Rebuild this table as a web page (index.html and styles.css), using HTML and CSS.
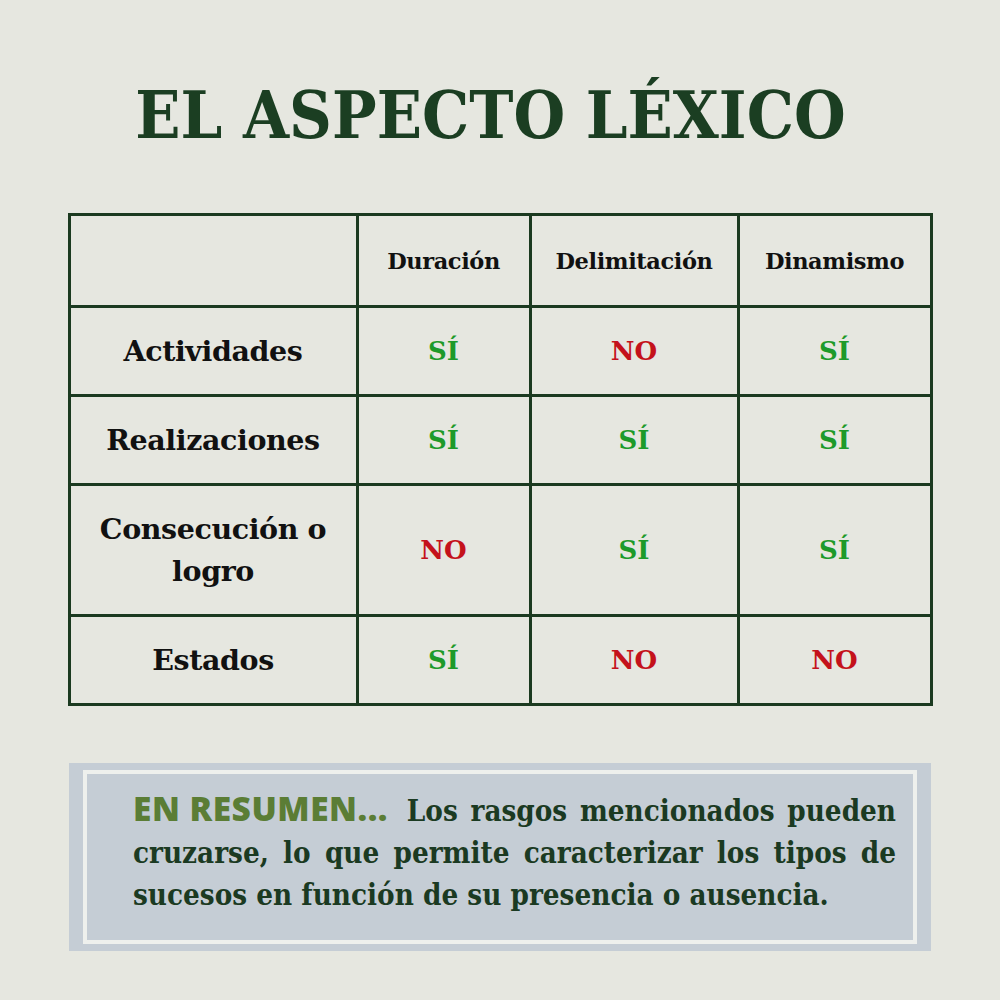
FILE: index.html
```html
<!DOCTYPE html>
<html lang="es">
<head>
<meta charset="utf-8">
<link rel="stylesheet" href="styles.css">
</head>
<body>
<main class="page">
  <h1 class="title">EL ASPECTO LÉXICO</h1>
  <table class="grid">
    <colgroup>
      <col class="c1"><col class="c2"><col class="c3"><col class="c4">
    </colgroup>
    <tr class="head">
      <th></th><th>Duración</th><th>Delimitación</th><th>Dinamismo</th>
    </tr>
    <tr class="row">
      <th>Actividades</th><td class="yes">SÍ</td><td class="no">NO</td><td class="yes">SÍ</td>
    </tr>
    <tr class="row">
      <th>Realizaciones</th><td class="yes">SÍ</td><td class="yes">SÍ</td><td class="yes">SÍ</td>
    </tr>
    <tr class="row tall">
      <th>Consecución o<br>logro</th><td class="no">NO</td><td class="yes">SÍ</td><td class="yes">SÍ</td>
    </tr>
    <tr class="row">
      <th>Estados</th><td class="yes">SÍ</td><td class="no">NO</td><td class="no">NO</td>
    </tr>
  </table>
  <section class="summary">
    <div class="frame">
      <p class="text"><span class="lead">EN RESUMEN...</span> Los rasgos mencionados pueden cruzarse, lo que permite caracterizar los tipos de sucesos en función de su presencia o ausencia.</p>
    </div>
  </section>
</main>
</body>
</html>
```

FILE: styles.css
```css
html, body {
  margin: 0;
  padding: 0;
  background: #e6e7e0;
}
.page {
  width: 1000px;
  height: 1000px;
  display: flex;
  flex-direction: column;
  align-items: center;
}
.title {
  margin: 75px 0 0 0;
  padding-right: 19px;
  font-family: "DejaVu Serif Condensed", "DejaVu Serif", serif;
  font-stretch: condensed;
  font-weight: bold;
  font-size: 66px;
  line-height: 80px;
  color: #1b3e22;
}
.grid {
  margin-top: 58px;
  border-collapse: collapse;
  border: 3px solid #1b3a20;
  font-family: "DejaVu Serif", serif;
  font-weight: bold;
  text-align: center;
}
.c1 { width: 288px; }
.c2 { width: 173px; }
.c3 { width: 208px; }
.c4 { width: 193px; }
.grid th, .grid td {
  border: 3px solid #1b3a20;
  padding: 0;
  text-align: center;
  vertical-align: middle;
}
.head th {
  height: 89px;
  font-size: 22.5px;
  color: #111;
  letter-spacing: -0.4px;
}
.row th {
  font-size: 28.5px;
  color: #111;
  line-height: 42px;
  letter-spacing: -0.4px;
}
.row { height: 89px; }
.row.tall { height: 131px; }
.grid td {
  font-size: 26px;
}
.yes { color: #1d9a2a; }
.no { color: #c4121b; }
.summary {
  margin-top: 57px;
  width: 862px;
  height: 188px;
  background: #c5cdd5;
  padding: 7px 14px 7px 14px;
  box-sizing: border-box;
}
.frame {
  height: 100%;
  border: 4px solid #eef0ed;
  box-sizing: border-box;
  padding: 16px 17px 0 46px;
}
.text {
  margin: 0;
  font-family: "DejaVu Serif Condensed", "DejaVu Serif", serif;
  font-stretch: condensed;
  font-weight: bold;
  font-size: 29.3px;
  line-height: 42px;
  color: #1b3a22;
  text-align: justify;
}
.lead {
  display: inline-block;
  font-family: "Open Sans", "DejaVu Sans", sans-serif;
  font-stretch: normal;
  font-weight: 800;
  font-size: 33.5px;
  line-height: 36px;
  letter-spacing: 0.5px;
  color: #5b7d35;
  margin-right: 6px;
}
```
